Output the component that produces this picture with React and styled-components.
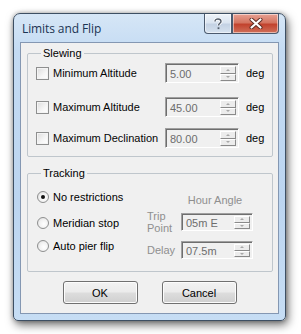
import React from 'react'
import styled, { createGlobalStyle } from 'styled-components'

const Global = createGlobalStyle`
  * { box-sizing: border-box; }
  body {
    margin: 0;
    background: #fff;
    font-family: "Liberation Sans", Arial, sans-serif;
    font-size: 11px;
    color: #000;
  }
`

const Page = styled.div`
  width: 301px;
  height: 334px;
  padding: 13px 0 0 13px;
`

const Janela = styled.div`
  width: 273px;
  height: 308px;
  border: 1px solid #3d4f63;
  border-radius: 7px 7px 5px 5px;
  background: linear-gradient(180deg, #d6e6f6 0%, #c4dbf3 12%, #bcd5f0 60%, #c6ddf4 100%);
  padding: 0 6px 6px;
  box-shadow: 2px 4px 10px rgba(0, 0, 0, 0.55), 0 0 4px rgba(0, 0, 0, 0.3);
  display: flex;
  flex-direction: column;
`

const BarraTitulo = styled.div`
  height: 28px;
  display: flex;
  align-items: flex-start;
  justify-content: space-between;
`

const Titulo = styled.span`
  font-family: "Open Sans", "Liberation Sans", sans-serif;
  font-size: 12px;
  color: #1b3453;
  margin: 6px 0 0 2px;
  letter-spacing: -0.1px;
`

const Botoes = styled.div`
  display: flex;
`

const BotaoJanela = styled.div`
  height: 20px;
  width: ${p => p.$w}px;
  border: 1px solid #4b5a6e;
  border-top: none;
  display: flex;
  align-items: center;
  justify-content: center;
  border-radius: ${p => p.$r};
  background: ${p => p.$close
    ? 'linear-gradient(180deg, #e8a193 0%, #d47561 45%, #c2432e 55%, #d0705a 100%)'
    : 'linear-gradient(180deg, #eef3f9 0%, #dbe5f1 45%, #c4d2e4 55%, #d6e2ef 100%)'};
  box-shadow: inset 0 0 0 1px rgba(255, 255, 255, 0.5);
`

const Cliente = styled.div`
  flex: 1;
  border: 1px solid #8497b2;
  background: #f0f0f0;
  display: flex;
  flex-direction: column;
  padding: 4px 5px 0 6px;
`

const Grupo = styled.fieldset`
  margin: ${p => p.$mt}px 0 0;
  padding: ${p => p.$pad};
  border: 1px solid #bfc6cc;
  border-radius: 2px;
  min-width: 0;
`

const Legenda = styled.legend`
  padding: 0 2px;
  margin-left: 5px;
  line-height: 13px;
`

const Linha = styled.div`
  display: flex;
  align-items: center;
  height: 20px;
  margin-top: ${p => p.$mt}px;
`

const Caixa = styled.span`
  width: 13px;
  height: 13px;
  border: 1px solid #8e8f8f;
  background: linear-gradient(135deg, #dcdcdc 0%, #f6f6f6 60%, #fff 100%);
  box-shadow: inset 0 0 0 1px #f4f4f4;
  margin-right: 4px;
  flex-shrink: 0;
`

const Rotulo = styled.span`
  width: ${p => p.$w}px;
  white-space: nowrap;
  color: #050505;
`

const CampoTexto = styled.div`
  width: ${p => p.$w}px;
  height: ${p => p.$h}px;
  border: 1px solid;
  border-color: #a0a0a0 #fff #fff #a0a0a0;
  box-shadow: inset 1px 1px 0 #6e6e6e;
  background: #f0f0f0;
  display: flex;
  align-items: stretch;
  padding: 2px 2px 1px 3px;
`

const ValorTexto = styled.span`
  flex: 1;
  color: #6d6d6d;
  display: flex;
  align-items: center;
  padding-left: 1px;
`

const Spin = styled.div`
  width: 16px;
  display: flex;
  flex-direction: column;
`

const SpinBotao = styled.div`
  flex: 1;
  border: 1px solid;
  border-color: #fff #8a8a8a #8a8a8a #fff;
  background: #ececec;
  display: flex;
  align-items: center;
  justify-content: center;
  &::after {
    content: '';
    border-left: 2px solid transparent;
    border-right: 2px solid transparent;
    ${p => p.$down ? 'border-top: 2px solid #a8a8a8;' : 'border-bottom: 2px solid #a8a8a8;'}
  }
`

const Unidade = styled.span`
  margin-left: 7px;
`

const Colunas = styled.div`
  display: flex;
`

const ColunaRadio = styled.div`
  width: 103px;
  padding-top: 10px;
  display: flex;
  flex-direction: column;
`

const LinhaRadio = styled.div`
  display: flex;
  align-items: center;
  height: 14px;
  white-space: nowrap;
  margin-bottom: ${p => p.$mb}px;
`

const Radio = styled.span`
  width: 12px;
  height: 12px;
  border-radius: 50%;
  border: 1px solid #8e8f8f;
  background: radial-gradient(circle at 60% 60%, #fff 0%, #f2f2f2 50%, #d8d8d8 100%);
  margin: 0 4px 0 1px;
  display: flex;
  align-items: center;
  justify-content: center;
  &::after {
    content: '';
    width: 4px;
    height: 4px;
    border-radius: 50%;
    background: ${p => p.$on ? '#111' : 'transparent'};
  }
`

const GradeAngulo = styled.div`
  display: grid;
  grid-template-columns: 34px 72px;
  row-gap: 7px;
  align-items: center;
  margin-left: 8px;
  padding-top: 14px;
`

const Cabecalho = styled.div`
  grid-column: 2;
  text-align: center;
  color: #8f8f8f;
  margin-left: -4px;
  margin-bottom: -3px;
`

const RotuloCinza = styled.div`
  color: #8f8f8f;
  line-height: 12px;
`

const RodapeBotoes = styled.div`
  display: flex;
  justify-content: center;
  gap: 24px;
  margin-top: 9px;
  padding-right: 1px;
`

const Botao = styled.button`
  width: 75px;
  height: 23px;
  font-family: "Liberation Sans", Arial, sans-serif;
  font-size: 11px;
  color: #000;
  border: 1px solid #707070;
  border-radius: 3px;
  background: linear-gradient(180deg, #f2f2f2 0%, #ebebeb 48%, #dddddd 52%, #cfcfcf 100%);
  box-shadow: inset 0 0 0 1px #fcfcfc;
  padding: 0;
`

function Numero({ valor, w, h }) {
  return (
    <CampoTexto $w={w} $h={h}>
      <ValorTexto>{valor}</ValorTexto>
      <Spin>
        <SpinBotao />
        <SpinBotao $down />
      </Spin>
    </CampoTexto>
  )
}

const limites = [
  { nome: 'Minimum Altitude', valor: '5.00', mt: 0 },
  { nome: 'Maximum Altitude', valor: '45.00', mt: 14 },
  { nome: 'Maximum Declination', valor: '80.00', mt: 11 },
]

export default function App() {
  return (
    <Page>
      <Global />
      <Janela>
        <BarraTitulo>
          <Titulo>Limits and Flip</Titulo>
          <Botoes>
            <BotaoJanela $w={28} $r="0 0 0 4px">
              <svg width="10" height="12" viewBox="0 0 10 12">
                <path d="M2 3.5 C2 1.5 3.5 1 5 1 C6.8 1 8 2 8 3.5 C8 5.2 5.5 5.5 5.5 7.5" fill="none" stroke="#fff" strokeWidth="3" />
                <path d="M2 3.5 C2 1.5 3.5 1 5 1 C6.8 1 8 2 8 3.5 C8 5.2 5.5 5.5 5.5 7.5" fill="none" stroke="#545e6c" strokeWidth="1.4" />
                <rect x="4.6" y="9.3" width="1.8" height="1.8" fill="#545e6c" />
              </svg>
            </BotaoJanela>
            <BotaoJanela $w={47} $r="0 0 4px 0" $close>
              <svg width="14" height="11" viewBox="0 0 14 11">
                <path d="M2.5 1.5 L11.5 9.5 M11.5 1.5 L2.5 9.5" stroke="#5a2a22" strokeWidth="4" strokeLinecap="round" />
                <path d="M2.5 1.5 L11.5 9.5 M11.5 1.5 L2.5 9.5" stroke="#fff" strokeWidth="2.2" strokeLinecap="round" />
              </svg>
            </BotaoJanela>
          </Botoes>
        </BarraTitulo>
        <Cliente>
          <Grupo $mt={0} $pad="3px 4px 8px 8px">
            <Legenda>Slewing</Legenda>
            {limites.map(item => (
              <Linha key={item.nome} $mt={item.mt}>
                <Caixa />
                <Rotulo $w={112}>{item.nome}</Rotulo>
                <Numero valor={item.valor} w={74} h={20} />
                <Unidade>deg</Unidade>
              </Linha>
            ))}
          </Grupo>
          <Grupo $mt={10} $pad="0 4px 12px 8px">
            <Legenda>Tracking</Legenda>
            <Colunas>
              <ColunaRadio>
                <LinhaRadio $mb={12}><Radio $on />No restrictions</LinhaRadio>
                <LinhaRadio $mb={9}><Radio />Meridian stop</LinhaRadio>
                <LinhaRadio $mb={0}><Radio />Auto pier flip</LinhaRadio>
              </ColunaRadio>
              <GradeAngulo>
                <Cabecalho>Hour Angle</Cabecalho>
                <RotuloCinza>Trip<br />Point</RotuloCinza>
                <Numero valor="05m E" w={72} h={18} />
                <RotuloCinza>Delay</RotuloCinza>
                <Numero valor="07.5m" w={72} h={18} />
              </GradeAngulo>
            </Colunas>
          </Grupo>
          <RodapeBotoes>
            <Botao>OK</Botao>
            <Botao>Cancel</Botao>
          </RodapeBotoes>
        </Cliente>
      </Janela>
    </Page>
  )
}
